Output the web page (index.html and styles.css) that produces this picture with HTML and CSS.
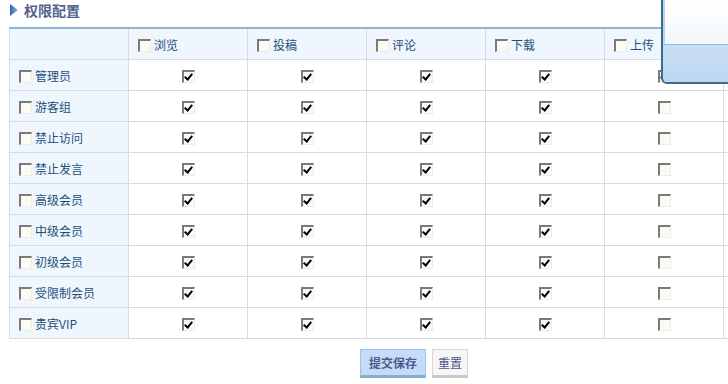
FILE: index.html
```html
<!DOCTYPE html>
<html>
<head>
<meta charset="utf-8">
<link rel="stylesheet" href="styles.css">
</head>
<body>
<div class="page">
  <h2 class="title"><svg class="tri" width="8" height="12" viewBox="0 0 8 12"><defs><linearGradient id="g" x1="0" y1="0" x2="1" y2="0"><stop offset="0" stop-color="#2f63b8"/><stop offset="1" stop-color="#8fb3e6"/></linearGradient></defs><path d="M0 0 L8 6 L0 12 Z" fill="url(#g)"/></svg>权限配置</h2>
  <div class="tablewrap">
  <table class="perm">
    <colgroup><col><col><col><col><col><col><col></colgroup>
    <thead>
      <tr>
        <th class="first"></th>
        <th><span class="cb"></span>浏览</th>
        <th><span class="cb"></span>投稿</th>
        <th><span class="cb"></span>评论</th>
        <th><span class="cb"></span>下载</th>
        <th><span class="cb"></span>上传</th>
        <th></th>
      </tr>
    </thead>
    <tbody>
      <tr><td class="first"><span class="cb"></span>管理员</td><td><span class="cb on"></span></td><td><span class="cb on"></span></td><td><span class="cb on"></span></td><td><span class="cb on"></span></td><td><span class="cb on"></span></td><td></td></tr>
      <tr><td class="first"><span class="cb"></span>游客组</td><td><span class="cb on"></span></td><td><span class="cb on"></span></td><td><span class="cb on"></span></td><td><span class="cb on"></span></td><td><span class="cb"></span></td><td></td></tr>
      <tr><td class="first"><span class="cb"></span>禁止访问</td><td><span class="cb on"></span></td><td><span class="cb on"></span></td><td><span class="cb on"></span></td><td><span class="cb on"></span></td><td><span class="cb"></span></td><td></td></tr>
      <tr><td class="first"><span class="cb"></span>禁止发言</td><td><span class="cb on"></span></td><td><span class="cb on"></span></td><td><span class="cb on"></span></td><td><span class="cb on"></span></td><td><span class="cb"></span></td><td></td></tr>
      <tr><td class="first"><span class="cb"></span>高级会员</td><td><span class="cb on"></span></td><td><span class="cb on"></span></td><td><span class="cb on"></span></td><td><span class="cb on"></span></td><td><span class="cb"></span></td><td></td></tr>
      <tr><td class="first"><span class="cb"></span>中级会员</td><td><span class="cb on"></span></td><td><span class="cb on"></span></td><td><span class="cb on"></span></td><td><span class="cb on"></span></td><td><span class="cb"></span></td><td></td></tr>
      <tr><td class="first"><span class="cb"></span>初级会员</td><td><span class="cb on"></span></td><td><span class="cb on"></span></td><td><span class="cb on"></span></td><td><span class="cb on"></span></td><td><span class="cb"></span></td><td></td></tr>
      <tr><td class="first"><span class="cb"></span>受限制会员</td><td><span class="cb on"></span></td><td><span class="cb on"></span></td><td><span class="cb on"></span></td><td><span class="cb on"></span></td><td><span class="cb"></span></td><td></td></tr>
      <tr><td class="first"><span class="cb"></span>贵宾VIP</td><td><span class="cb on"></span></td><td><span class="cb on"></span></td><td><span class="cb on"></span></td><td><span class="cb on"></span></td><td><span class="cb"></span></td><td></td></tr>
    </tbody>
  </table>
  </div>
  <div class="actions">
    <button class="btn primary">提交保存</button>
    <button class="btn">重置</button>
  </div>
</div>
<div class="popup"><div class="popup-top"></div><div class="popup-bottom"></div></div>
</body>
</html>
```
FILE: styles.css
```css
html, body {
  margin: 0;
  padding: 0;
  background: #fff;
  overflow: hidden;
  width: 728px;
  height: 384px;
}
body {
  font-family: "Noto Sans CJK SC", "Liberation Sans", sans-serif;
  font-size: 12px;
  color: #1e4f7c;
}
.page {
  padding: 0 0 0 9px;
}
.title {
  margin: 0 0 0 1px;
  height: 27px;
  display: flex;
  align-items: flex-start;
  font-size: 14px;
  font-weight: bold;
  color: #55618f;
  line-height: 20px;
}
.tri {
  margin-top: 4px;
  margin-right: 6px;
}
.tablewrap {
  width: 719px;
  overflow: hidden;
}
.perm {
  border-collapse: collapse;
  table-layout: fixed;
  width: 833px;
  border-top: 2px solid #8db6d2;
}
.perm col { width: 119px; }
.perm th, .perm td {
  border: 1px solid #d6dce3;
  height: 30px;
  padding: 0;
  text-align: center;
  vertical-align: middle;
}
.perm th {
  background: #f0f6fd;
  font-weight: normal;
  text-align: left;
  padding-left: 9px;
  color: #1e4f7c;
}
.perm td.first {
  background: #f0f6fd;
  text-align: left;
  padding-left: 9px;
}
.perm th.first { padding: 0; }
.cb {
  display: inline-block;
  width: 13px;
  height: 13px;
  box-sizing: border-box;
  border-top: 2px solid #7a7a7a;
  border-left: 2px solid #7a7a7a;
  border-right: 1px solid #ececec;
  border-bottom: 1px solid #ececec;
  background: #fbfbf4;
  vertical-align: -2px;
  margin-right: 3px;
  position: relative;
}
td:not(.first) .cb { margin-right: 0; }
.cb.on::after {
  content: "";
  position: absolute;
  left: 2px;
  top: 0px;
  width: 3px;
  height: 6px;
  border-right: 2px solid #000;
  border-bottom: 2px solid #000;
  transform: rotate(40deg);
}
.actions {
  display: flex;
  gap: 6px;
  padding-top: 10px;
  padding-left: 351px;
}
.btn {
  font-family: "Noto Sans CJK SC", "Liberation Sans", sans-serif;
  font-size: 12px;
  height: 29px;
  padding: 0 5px;
  border: 1px solid #d8d8d8;
  border-bottom: 3px solid #c8c8c8;
  background: #f6f6f6;
  color: #4e5a8a;
  line-height: 24px;
}
.btn.primary {
  font-weight: bold;
  background: #c4dcfa;
  border-color: #9fc0e6;
  border-bottom-color: #86aec8;
  width: 66px;
}
.popup {
  position: absolute;
  left: 661px;
  top: -4px;
  width: 80px;
  height: 88px;
  box-sizing: border-box;
  border: 2px solid #3a6d8c;
  border-radius: 0 0 6px 6px;
  display: flex;
  flex-direction: column;
  overflow: hidden;
}
.popup-top {
  height: 46px;
  background: linear-gradient(#ffffff, #f3f7fb);
  border-left: 2px solid #b8d4ec;
  border-bottom: 1px solid #8fb5d6;
}
.popup-bottom {
  flex: 1;
  background: linear-gradient(#c9def4, #bcd6f1);
}
```
